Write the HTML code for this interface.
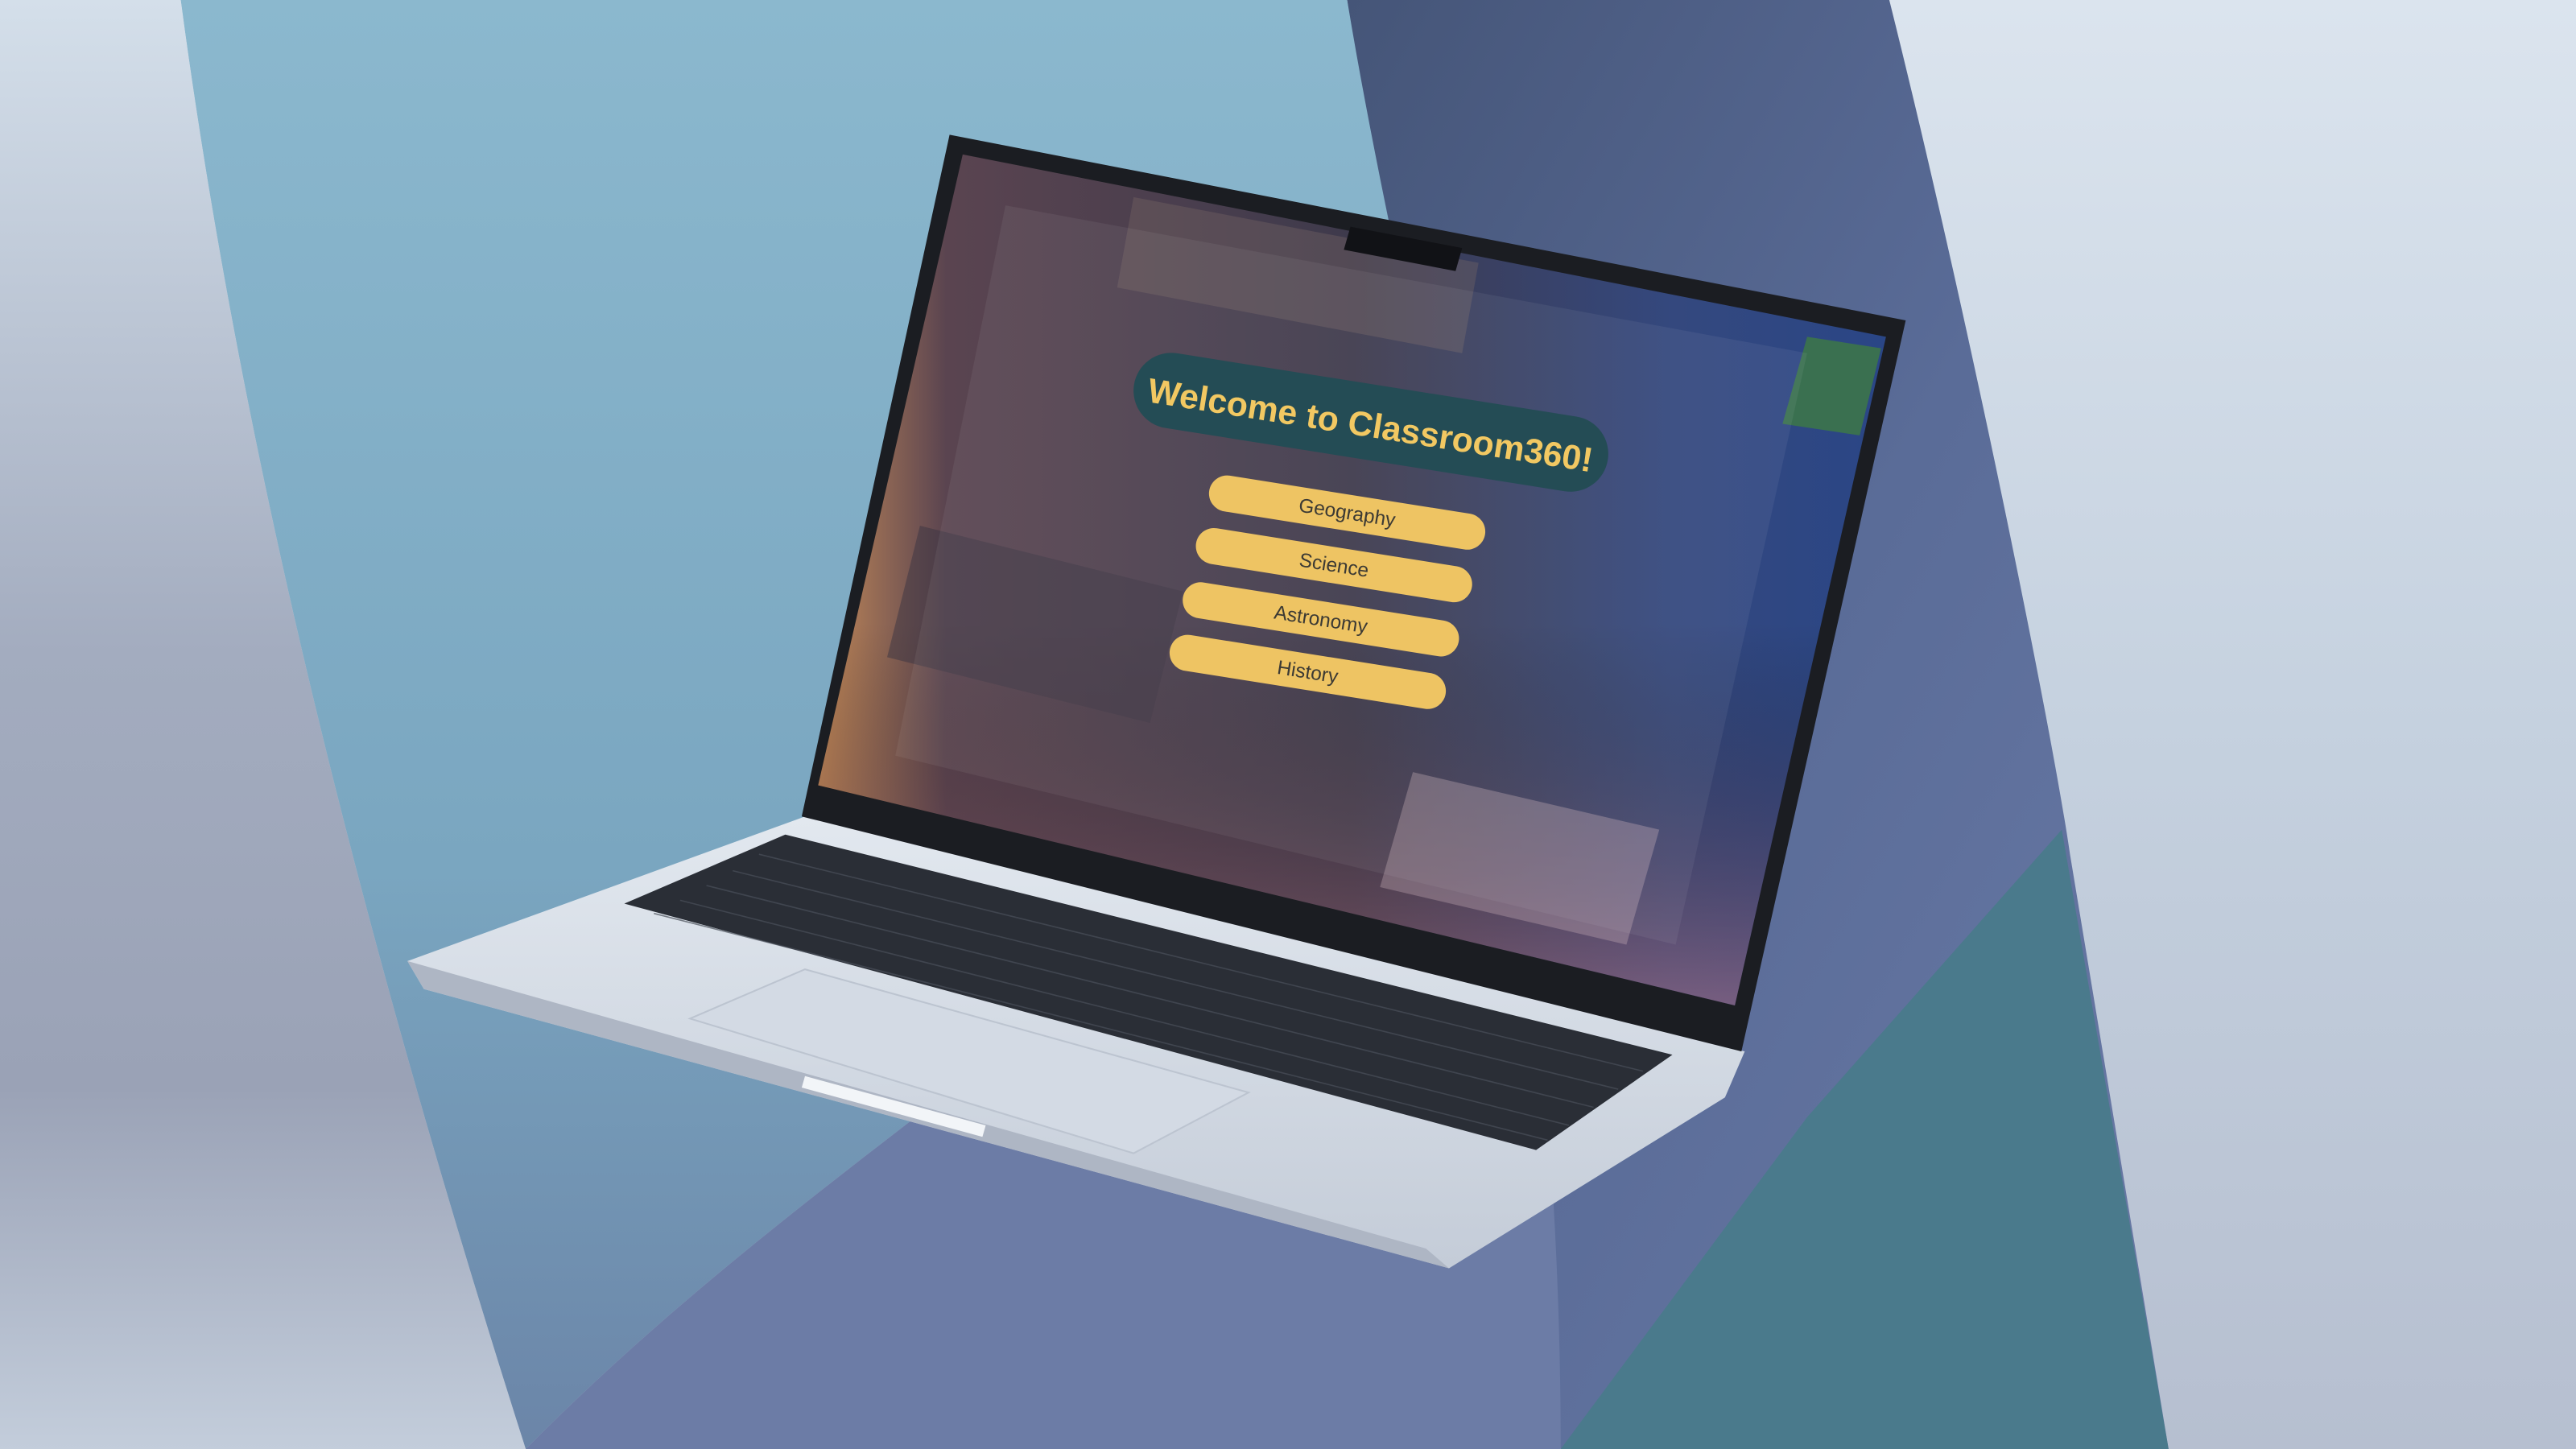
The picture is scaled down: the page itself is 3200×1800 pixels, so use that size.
<!DOCTYPE html>
<html><head><meta charset="utf-8"><style>
html,body{margin:0;padding:0;width:3200px;height:1800px;overflow:hidden;background:#c7d3e0}
svg{display:block}
</style></head><body>
<svg width="3200" height="1800" viewBox="0 0 1568 882" preserveAspectRatio="none" xmlns="http://www.w3.org/2000/svg">
<defs>
<linearGradient id="lp" x1="0" y1="0" x2="0" y2="1">
<stop offset="0" stop-color="#d4dfea"/><stop offset="0.45" stop-color="#a3acbf"/><stop offset="0.75" stop-color="#9aa2b6"/><stop offset="1" stop-color="#c3cddb"/></linearGradient>
<linearGradient id="rb" x1="0" y1="0" x2="0" y2="1">
<stop offset="0" stop-color="#8bb8ce"/><stop offset="0.6" stop-color="#7aa6c0"/><stop offset="1" stop-color="#6b85a8"/></linearGradient>
<linearGradient id="dk" x1="0" y1="0" x2="1" y2="1">
<stop offset="0" stop-color="#455578"/><stop offset="0.5" stop-color="#5a6c98"/><stop offset="1" stop-color="#6a7aa6"/></linearGradient>
<linearGradient id="rt" x1="0" y1="0" x2="0" y2="1">
<stop offset="0" stop-color="#dbe4ee"/><stop offset="0.5" stop-color="#c5d1df"/><stop offset="1" stop-color="#b6bfd0"/></linearGradient>
<linearGradient id="sc" x1="0" y1="0" x2="1" y2="0">
<stop offset="0" stop-color="#c58a58"/><stop offset="0.12" stop-color="#5a4450"/><stop offset="0.5" stop-color="#3e3a4c"/><stop offset="0.8" stop-color="#34487e"/><stop offset="1" stop-color="#2a4686"/></linearGradient>
<linearGradient id="scb" x1="0" y1="0" x2="0" y2="1">
<stop offset="0.55" stop-color="#000" stop-opacity="0"/><stop offset="1" stop-color="#b07080" stop-opacity="0.55"/></linearGradient>
<linearGradient id="base" x1="0" y1="0" x2="0" y2="1">
<stop offset="0" stop-color="#e2e8ef"/><stop offset="1" stop-color="#c4ccd8"/></linearGradient>
</defs>
<rect width="1568" height="882" fill="url(#rt)"/>
<path d="M820,0 L1150,0 C1200,200 1250,450 1260,520 L1320,882 L950,882 C900,600 860,300 820,0 Z" fill="url(#dk)"/>
<path d="M1100,680 L1255,505 L1320,882 L950,882 Z" fill="#4a7a8c"/>
<path d="M110,0 L820,0 C840,120 870,250 900,380 C700,600 500,700 320,882 C230,600 150,300 110,0 Z" fill="url(#rb)"/>
<path d="M320,882 C500,700 700,600 900,380 C930,520 950,700 950,882 Z" fill="#6c7ca6"/>
<path d="M0,0 L110,0 C150,300 230,600 320,882 L0,882 Z" fill="url(#lp)"/>
<path d="M490,497 L1062,640 L1050,668 L882,772 L258,602 L248,585 Z" fill="url(#base)"/>
<path d="M248,585 L258,602 L882,772 L868,760 Z" fill="#aeb6c4"/>
<path d="M478,508 L1018,642 L935,700 L380,550 Z" fill="#2a2e36"/>
<g stroke="#4a505a" stroke-width="0.8" opacity="0.7">
<path d="M462,520 L1000,652"/><path d="M446,530 L985,663"/><path d="M430,539 L970,674"/><path d="M414,548 L955,685"/><path d="M398,556 L942,694"/>
</g>
<path d="M490,590 L760,665 L690,702 L420,620 Z" fill="#d3dae4" stroke="#bcc4d0" stroke-width="1"/>
<path d="M490,655 L600,685 L598,692 L488,662 Z" fill="#f2f5f8"/>
<path d="M578,82 L1160,195 L1060,640 L488,497 Z" fill="#1b1d22"/>
<path d="M586,94 L1148,205 L1056,612 L498,478 Z" fill="url(#sc)"/>
<path d="M586,94 L1148,205 L1056,612 L498,478 Z" fill="url(#scb)"/>
<path d="M690,120 L900,160 L890,215 L680,175 Z" fill="#7a6a68" opacity="0.35"/>
<path d="M1100,205 L1145,212 L1132,265 L1085,258 Z" fill="#3a7050"/>
<path d="M860,470 L1010,505 L990,575 L840,540 Z" fill="#c8b0b8" opacity="0.35"/>
<path d="M560,320 L720,360 L700,440 L540,400 Z" fill="#3a3442" opacity="0.5"/>
<path d="M822,138 L890,151 L886,165 L818,152 Z" fill="#111216"/>
<path d="M612,125 L1100,215 L1020,575 L545,460 Z" fill="#ffffff" opacity="0.06"/>
<g transform="rotate(9 834 260)">
<rect x="688" y="234" width="292" height="46" rx="23" fill="#244c55"/>
<text x="834" y="266" text-anchor="middle" font-family="Liberation Sans, sans-serif" font-weight="bold" font-size="21" fill="#f2c862">Welcome to Classroom360!</text>
</g>
<g font-family="Liberation Sans, sans-serif" font-size="12" fill="#3c3a34" text-anchor="middle">
<g transform="rotate(9 820 312)"><rect x="735" y="301" width="170" height="22" rx="11" fill="#eec463"/><text x="820" y="316">Geography</text></g>
<g transform="rotate(9 812 344)"><rect x="727" y="333" width="170" height="22" rx="11" fill="#eec463"/><text x="812" y="348">Science</text></g>
<g transform="rotate(9 804 377)"><rect x="719" y="366" width="170" height="22" rx="11" fill="#eec463"/><text x="804" y="381">Astronomy</text></g>
<g transform="rotate(9 796 409)"><rect x="711" y="398" width="170" height="22" rx="11" fill="#eec463"/><text x="796" y="413">History</text></g>
</g>
</svg>
</body></html>
